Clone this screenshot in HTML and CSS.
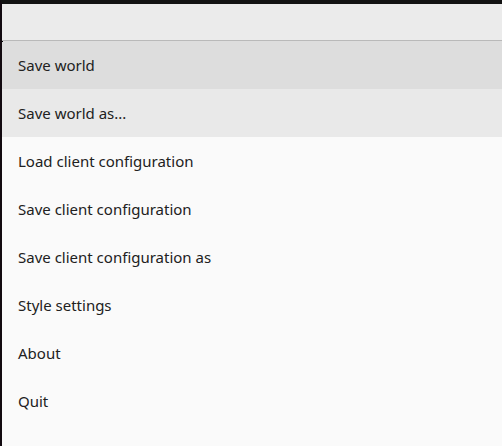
FILE: index.html
```html
<!DOCTYPE html>
<html lang="en">
<head>
<meta charset="utf-8">
<title>Client menu</title>
<link rel="stylesheet" href="styles.css">
</head>
<body>
<div class="window">
<header class="toolbar"></header>
<nav class="menu" aria-label="File">
<button class="item pressed" type="button">Save world</button>
<button class="item hovered" type="button">Save world as...</button>
<button class="item" type="button">Load client configuration</button>
<button class="item" type="button">Save client configuration</button>
<button class="item" type="button">Save client configuration as</button>
<button class="item" type="button">Style settings</button>
<button class="item" type="button">About</button>
<button class="item" type="button">Quit</button>
</nav>
</div>
</body>
</html>
```
FILE: styles.css
```css
* { box-sizing: border-box; }

body {
  margin: 0;
  font-family: "Noto Sans", sans-serif;
  font-size: 15px;
  color: #212121;
}

.window {
  display: flex;
  flex-direction: column;
  min-height: 100vh;
  border-top: 4px solid #121212;
  border-left: 2px solid #120a10;
  background: #fafafa;
}

.toolbar {
  height: 37px;
  border-bottom: 1px solid #b9b9b9;
  background: #ebebeb;
}

.menu {
  position: relative;
  display: flex;
  flex-direction: column;
}

/* Notch at the menu's top-left corner */
.menu::before {
  content: "";
  position: absolute;
  top: 0;
  left: 0;
  width: 1px;
  height: 1px;
  background: #000;
}

.item {
  height: 48px;
  padding: 0 16px;
  border: 0;
  background: transparent;
  color: inherit;
  font: inherit;
  text-align: left;
}

.pressed { background: #dddddd; }
.hovered { background: #e9e9e9; }
```
